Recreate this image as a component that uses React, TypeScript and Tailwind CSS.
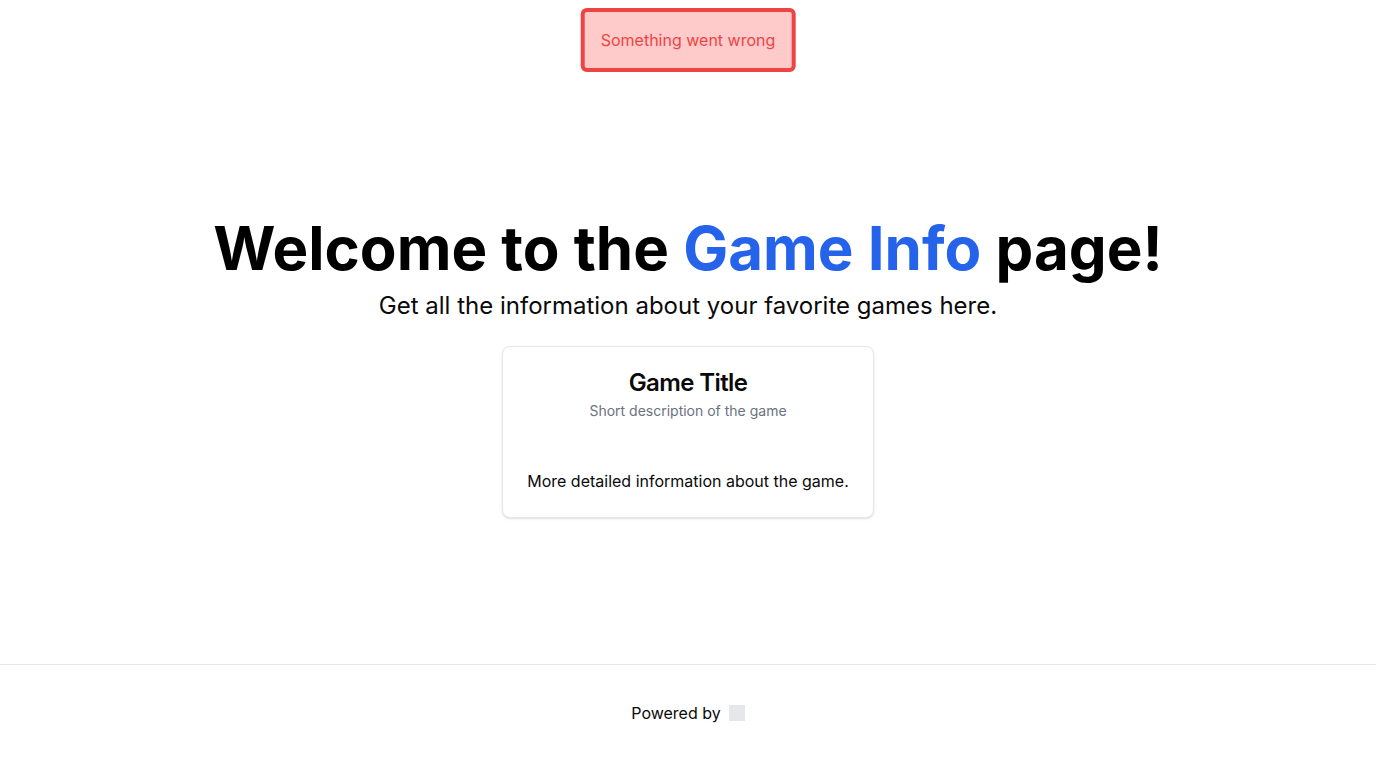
export default function App() {
  return (
    <div className="relative flex min-h-screen flex-col bg-white text-black" style={{ fontFamily: "Inter, 'Noto Sans', sans-serif" }}>
      {/* error toast */}
      <div className="absolute left-1/2 top-2 -translate-x-1/2 rounded-md border-4 border-[#ef4444] bg-[#fecaca] p-4 text-base leading-6 text-[#ef4444]">
        Something went wrong
      </div>

      <main className="flex flex-1 flex-col items-center justify-center px-4 pt-[71px]">
        <h1 className="text-6xl font-bold leading-none">
          Welcome to the <span className="text-[#2563eb]">Game Info</span> page!
        </h1>
        <p className="mt-3 text-2xl leading-8 text-[#0a0a0a]">
          Get all the information about your favorite games here.
        </p>

        <div className="mt-6 rounded-lg border border-[#e5e7eb] bg-white text-center shadow-sm">
          <div className="flex flex-col gap-1.5 p-6">
            <h3 className="text-2xl font-semibold leading-none tracking-tight text-[#0a0a0a]">Game Title</h3>
            <p className="text-sm leading-5 text-[#6b7280]">Short description of the game</p>
          </div>
          <div className="p-6">
            <p className="text-base leading-6 text-[#0a0a0a]">More detailed information about the game.</p>
          </div>
        </div>
      </main>

      <footer className="flex items-center justify-center gap-2 border-t border-[#e5e7eb] pb-[43px] pt-9">
        <span className="text-base leading-6 text-[#0a0a0a]">Powered by</span>
        <span className="h-4 w-4 bg-[#e5e7eb]" />
      </footer>
    </div>
  );
}
